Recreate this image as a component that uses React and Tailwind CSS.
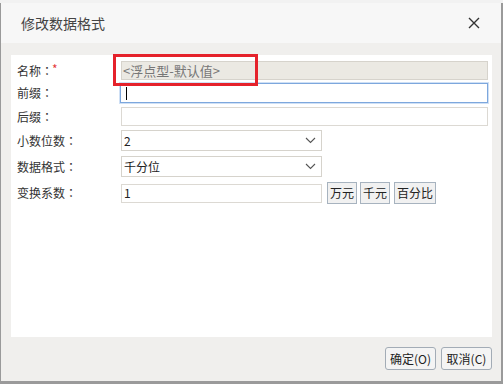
import React from 'react'

const font = { fontFamily: '"Noto Sans CJK SC", "Noto Sans", sans-serif' }

const Chevron = () => (
  <svg className="w-[11px] h-[7px] text-[#555]" viewBox="0 0 11 7" fill="none" stroke="currentColor" strokeWidth="1.1">
    <path d="M1 1l4.5 4.5L10 1" />
  </svg>
)

const Label = ({ children, required }) => (
  <div className="w-[104px] shrink-0 text-[12px] text-[#333] leading-none flex items-center">
    <span>{children}</span>
    <span className="font-['Noto_Sans_CJK_TC',sans-serif]">：</span>
    {required && <span className="text-[#e43b3b] -ml-[1px] -mt-[4px]">*</span>}
  </div>
)

const SmallButton = ({ children, className = '' }) => (
  <button className={`h-[22px] px-[2px] border border-[#a7b3bf] bg-[#f1f1f1] text-[12px] text-[#222] leading-none ${className}`}>
    {children}
  </button>
)

export default function App() {
  return (
    <div className="w-[503px] h-[384px] bg-[#9a9a9a] flex flex-col overflow-hidden" style={font}>
      {/* 背后的表格 */}
      <div className="h-[3px] shrink-0 bg-[#f2f2f2]" />

      {/* 对话框 */}
      <div className="flex-1 ml-[1px] mr-[2px] mb-[3px] flex flex-col bg-[#f0efed] relative">
        {/* 标题栏 */}
        <div className="h-[40px] shrink-0 bg-[#f7f7f7] flex items-center justify-between pl-[20px] pr-[21px]">
          <span className="text-[14px] text-[#444]">修改数据格式</span>
          <svg className="w-[12px] h-[12px] text-[#333]" viewBox="0 0 12 12" stroke="currentColor" strokeWidth="1.4">
            <path d="M1 1l10 10M11 1L1 11" />
          </svg>
        </div>

        {/* 内容区 */}
        <div className="flex-1 flex flex-col pt-[12px] pl-[10px] pr-[9px]">
          <div className="flex-1 bg-white flex flex-col pl-[6px] pr-[4px]">
            <div className="flex items-center mt-[6px]">
              <Label required>名称</Label>
              <div className="flex-1 h-[19px] bg-[#ebe9e3] border border-[#d6d3cc] flex items-center px-[1px] text-[13px] text-[#777]">
                &lt;浮点型-默认值&gt;
              </div>
            </div>

            <div className="flex items-center mt-[3px]">
              <Label>前缀</Label>
              <div className="flex-1 h-[20px] -ml-[1px] border border-[#7da7dd] shadow-[0_0_0_1px_#cfe0f5] flex items-center pl-[5px]">
                <div className="w-[1px] h-[13px] bg-black" />
              </div>
            </div>

            <div className="flex items-center mt-[4px]">
              <Label>后缀</Label>
              <div className="flex-1 h-[19px] border border-[#dcd9d3]" />
            </div>

            <div className="flex items-center mt-[4px]">
              <Label>小数位数</Label>
              <div className="w-[201px] h-[21px] border border-[#d6d3cc] flex items-center justify-between pl-[2px] pr-[5px] text-[12px] text-[#222]">
                <span>2</span>
                <Chevron />
              </div>
            </div>

            <div className="flex items-center mt-[5px]">
              <Label>数据格式</Label>
              <div className="w-[201px] h-[21px] border border-[#d6d3cc] flex items-center justify-between pl-[2px] pr-[5px] text-[12px] text-[#222]">
                <span>千分位</span>
                <Chevron />
              </div>
            </div>

            <div className="flex items-center mt-[5px]">
              <Label>变换系数</Label>
              <div className="w-[201px] h-[19px] border border-[#dcd9d3] flex items-center pl-[2px] text-[12px] text-[#222]">
                1
              </div>
              <SmallButton className="ml-[5px] w-[30px]">万元</SmallButton>
              <SmallButton className="ml-[3px] w-[30px]">千元</SmallButton>
              <SmallButton className="ml-[4px] w-[42px]">百分比</SmallButton>
            </div>
          </div>

          {/* 底部按钮 */}
          <div className="h-[44px] shrink-0 flex items-center justify-end gap-[5px] pb-[1px]">
            <button className="w-[51px] h-[23px] rounded-[3px] border border-[#a3acb6] bg-[#f4f4f4] text-[12px] text-[#222]">确定(O)</button>
            <button className="w-[51px] h-[23px] rounded-[3px] border border-[#a3acb6] bg-[#f4f4f4] text-[12px] text-[#222]">取消(C)</button>
          </div>
        </div>

        {/* 标注红框 */}
        <div className="absolute left-[112px] top-[51px] w-[145px] h-[32px] border-[3px] border-[#e5222b]" />
      </div>
    </div>
  )
}
